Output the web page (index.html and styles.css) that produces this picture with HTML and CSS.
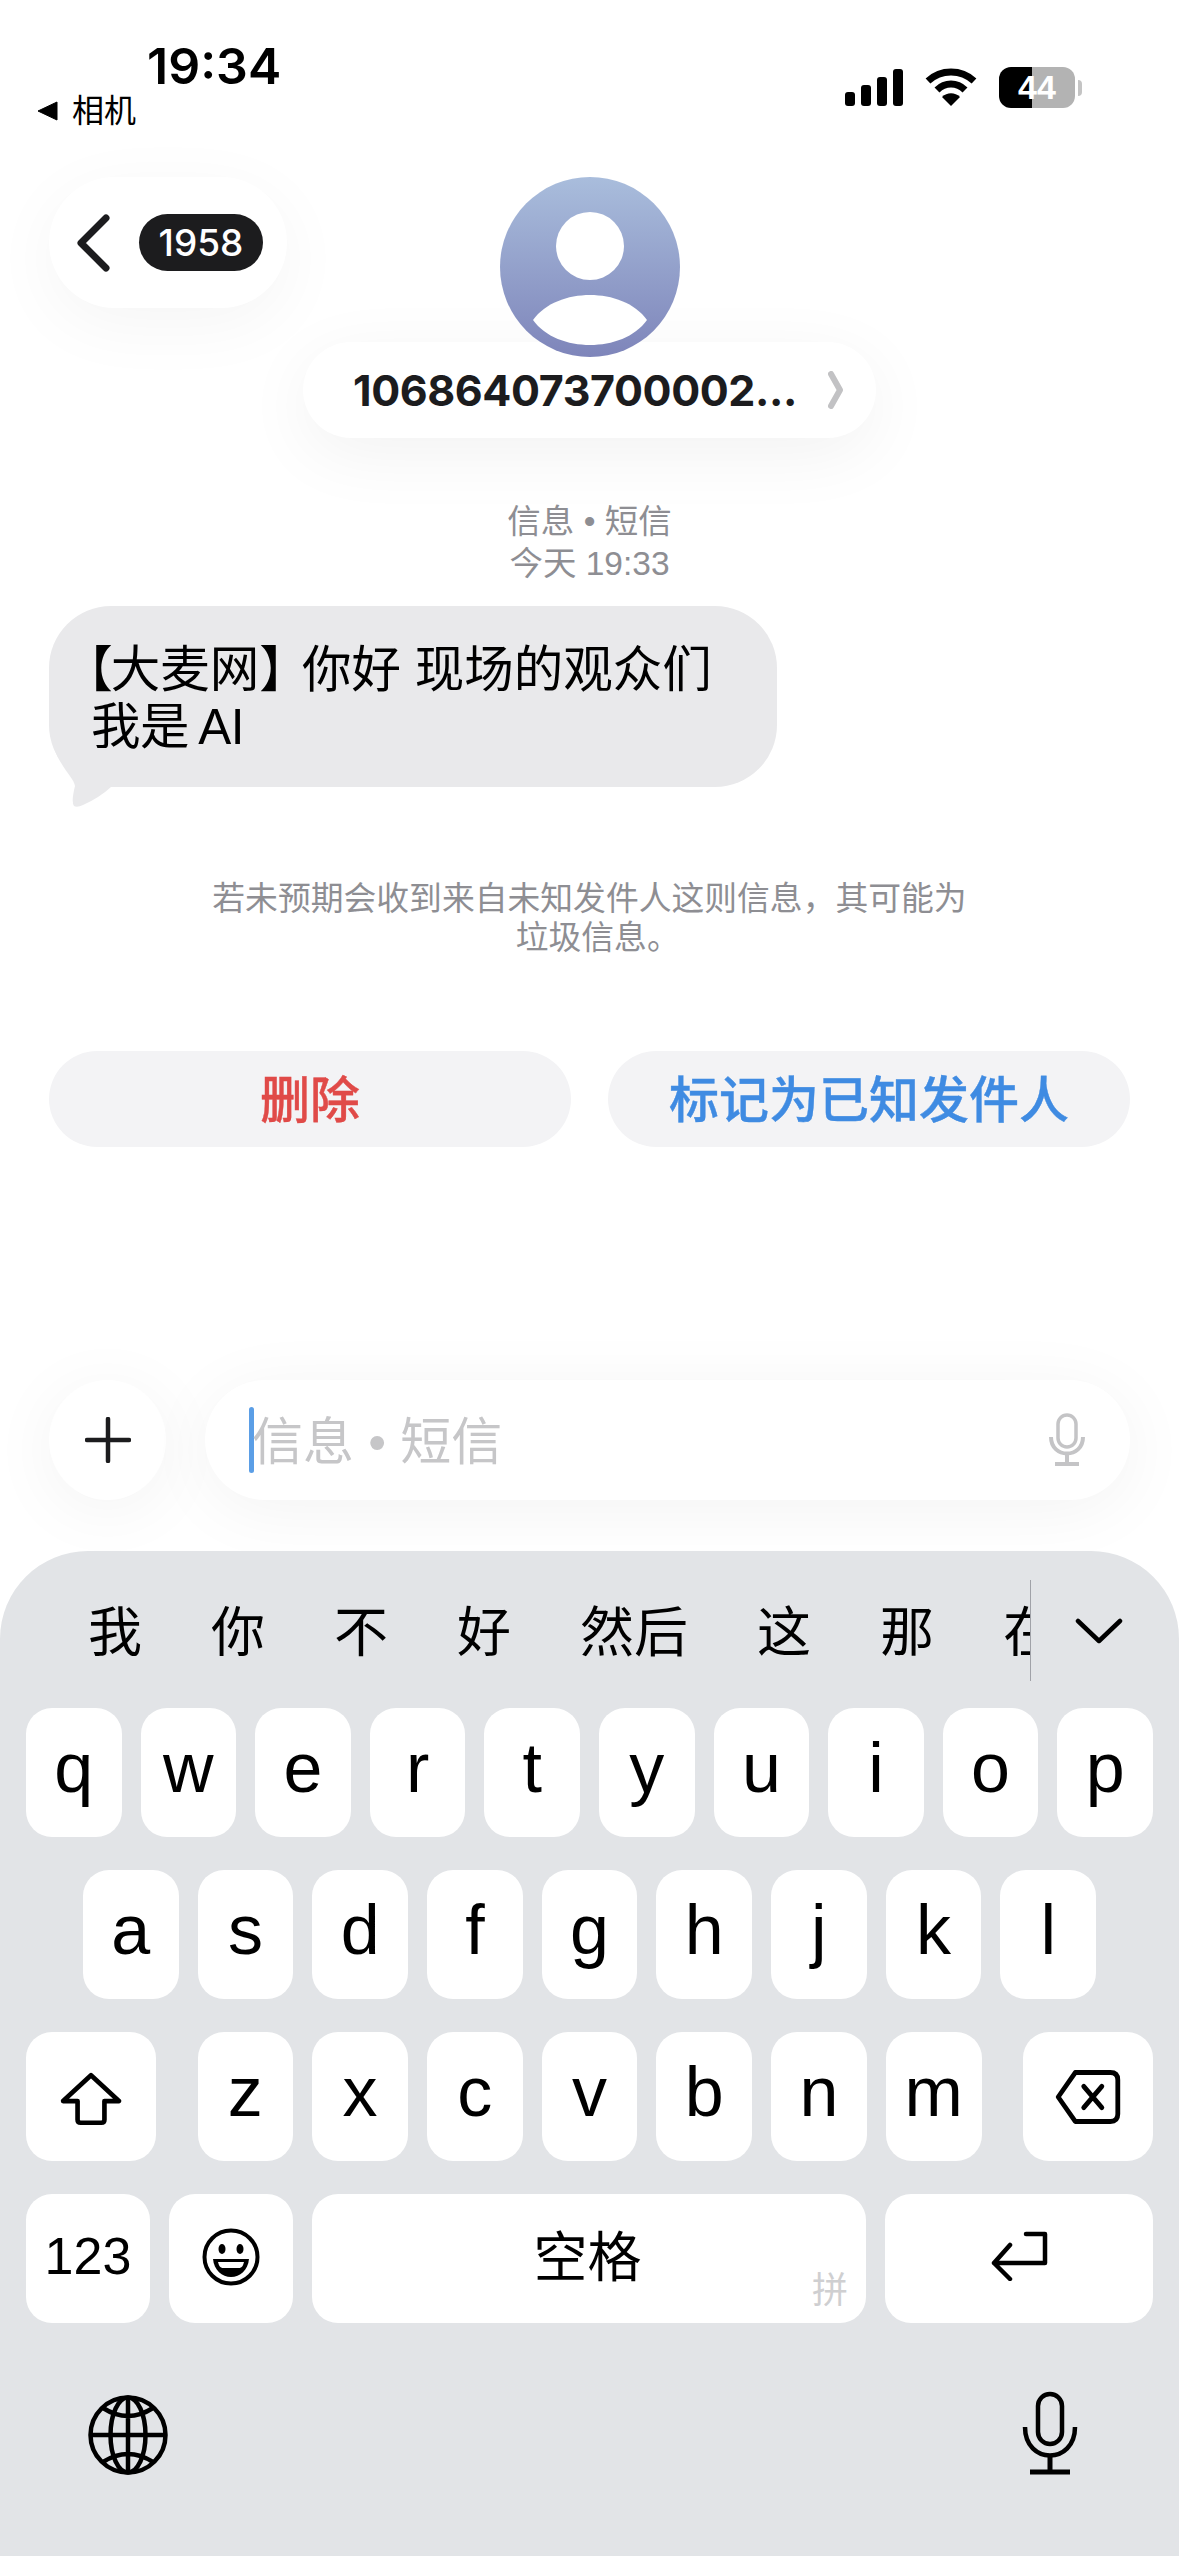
FILE: index.html
```html
<!DOCTYPE html>
<html lang="zh-CN">
<head>
  <meta charset="utf-8">
  <title>信息</title>
  <link rel="stylesheet" href="styles.css">
</head>
<body>
  <div class="phone">

    <div class="statusBar">
      <div class="statusLeft">
        <div class="time">19:34</div>
        <div class="backApp">
          <svg class="backTriangle" viewBox="0 0 21 20"><path d="M1 10 L20 1 V19 Z" fill="#000" stroke="#000" stroke-linejoin="round"/></svg>
          <span>相机</span>
        </div>
      </div>
      <div class="statusRight">
        <div class="signal">
          <span class="bar bar1"></span><span class="bar bar2"></span><span class="bar bar3"></span><span class="bar bar4"></span>
        </div>
        <svg class="wifi" viewBox="0 0 52 38">
          <path d="M3 13 C16 1 36 1 49 13" fill="none" stroke="#000" stroke-width="7"/>
          <path d="M12 22 C20 14 32 14 40 22" fill="none" stroke="#000" stroke-width="7"/>
          <path d="M17 29 C22 24 30 24 35 29 L26 38 Z" fill="#000"/>
        </svg>
        <div class="battery">44</div>
        <div class="batteryNub"></div>
      </div>
    </div>

    <div class="header">
      <div class="backPill">
        <svg class="backChevron" viewBox="0 0 34 58"><path d="M30 4 L5 29 L30 54" fill="none" stroke="#1c1c1e" stroke-width="7" stroke-linecap="round" stroke-linejoin="round"/></svg>
        <span class="badge">1958</span>
      </div>
      <div class="contact">
        <div class="avatar">
          <svg viewBox="0 0 180 180">
            <circle cx="90" cy="69" r="34" fill="#fff"/>
            <path d="M33 143 C45 126 68 118 90 118 C112 118 135 126 147 143 C135 160 112 168 90 168 C68 168 45 160 33 143 Z" fill="#fff"/>
          </svg>
        </div>
        <div class="namePill">
          <span class="name">106864073700002...</span>
          <svg class="nameChevron" viewBox="0 0 16 38"><path d="M3 3 L12 19 L3 35" fill="none" stroke="#c2c2c4" stroke-width="6" stroke-linecap="round" stroke-linejoin="round"/></svg>
        </div>
      </div>
    </div>

    <div class="meta">
      <div>信息 • 短信</div>
      <div>今天 19:33</div>
    </div>

    <div class="bubble">
      <div class="bubbleLine"><span class="bracketOpen">【</span>大麦网<span class="bracketClose">】</span>你好 现场的观众们</div>
      <div class="bubbleLine second">我是 AI</div>
      <svg class="bubbleTail" viewBox="0 0 80 60"><path d="M5 0 C12 20 25 30 26 38 Q22 54 25 58 Q28 60 34 57 Q50 50 62 39 L62 0 Z" fill="#e9e9eb"/></svg>
    </div>

    <div class="notice">
      <div>若未预期会收到来自未知发件人这则信息，其可能为</div>
      <div>垃圾信息<span class="halfStop">。</span></div>
    </div>

    <div class="actions">
      <div class="actionBtn deleteBtn">删除</div>
      <div class="actionBtn knownBtn">标记为已知发件人</div>
    </div>

    <div class="composer">
      <div class="plusBtn">
        <svg viewBox="0 0 46 46"><path d="M23 2 V44 M2 23 H44" stroke="#1c1c1e" stroke-width="4.5" stroke-linecap="round"/></svg>
      </div>
      <div class="inputBox">
        <span class="cursor"></span>
        <span class="placeholder">信息 • 短信</span>
        <svg class="inputMic" viewBox="0 0 36 54">
          <rect x="9" y="2" width="18" height="32" rx="9" fill="none" stroke="#c4c4c6" stroke-width="3.5"/>
          <path d="M2 24 C2 46 34 46 34 24 M18 41 V50 M6 51 H30" fill="none" stroke="#c4c4c6" stroke-width="4"/>
        </svg>
      </div>
    </div>

    <div class="keyboard">
      <div class="candidates">
        <div class="candidateList">
          <span>我</span><span>你</span><span>不</span><span>好</span><span>然后</span><span>这</span><span>那</span><span>在</span>
        </div>
        <svg class="candidateChevron" viewBox="0 0 48 26"><path d="M3 3 L24 23 L45 3" fill="none" stroke="#000" stroke-width="4.5" stroke-linecap="round" stroke-linejoin="round"/></svg>
      </div>

      <div class="keyRow">
        <div class="key">q</div><div class="key">w</div><div class="key">e</div><div class="key">r</div><div class="key">t</div><div class="key">y</div><div class="key">u</div><div class="key">i</div><div class="key">o</div><div class="key">p</div>
      </div>
      <div class="keyRow middleRow">
        <div class="key">a</div><div class="key">s</div><div class="key">d</div><div class="key">f</div><div class="key">g</div><div class="key">h</div><div class="key">j</div><div class="key">k</div><div class="key">l</div>
      </div>
      <div class="keyRow shiftRow">
        <div class="key sideKey">
          <svg class="shiftIcon" viewBox="0 0 60 52"><path d="M30 3 L57 28 H43 V46 Q43 49 40 49 H20 Q17 49 17 46 V28 H3 Z" fill="none" stroke="#000" stroke-width="4.5" stroke-linejoin="round"/></svg>
        </div>
        <div class="letterGroup">
          <div class="key">z</div><div class="key">x</div><div class="key">c</div><div class="key">v</div><div class="key">b</div><div class="key">n</div><div class="key">m</div>
        </div>
        <div class="key sideKey">
          <svg class="deleteIcon" viewBox="0 0 62 52"><path d="M19 3 H52 Q59 3 59 10 V42 Q59 49 52 49 H19 L3 26 Z" fill="none" stroke="#000" stroke-width="4.5" stroke-linejoin="round"/><path d="M27 16 L44 36 M44 16 L27 36" stroke="#000" stroke-width="4.5" stroke-linecap="round"/></svg>
        </div>
      </div>
      <div class="keyRow bottomRow">
        <div class="key numKey">123</div>
        <div class="key emojiKey">
          <svg class="emojiIcon" viewBox="0 0 58 58">
            <circle cx="29" cy="29" r="26.5" fill="none" stroke="#000" stroke-width="4"/>
            <ellipse cx="20" cy="21" rx="3.5" ry="5" fill="#000"/>
            <ellipse cx="38" cy="21" rx="3.5" ry="5" fill="#000"/>
            <path d="M11 31 H47 C46 42 38 49 29 49 C20 49 12 42 11 31 Z" fill="#000"/>
            <path d="M16 34 H42 C41 38 40 39 38 40 H20 C18 39 17 38 16 34 Z" fill="#fff"/>
          </svg>
        </div>
        <div class="key spaceKey">
          空格
          <span class="pinyinMark">拼</span>
        </div>
        <div class="key returnKey">
          <svg class="returnIcon" viewBox="0 0 58 50"><path d="M36 3 H55 V32 H4 M20 14 L4 32 L20 48" fill="none" stroke="#000" stroke-width="4.5" stroke-linecap="round" stroke-linejoin="round"/></svg>
        </div>
      </div>

      <div class="keyboardBottom">
        <svg class="globeIcon" viewBox="0 0 80 80">
          <g fill="none" stroke="#000" stroke-width="4.5">
            <circle cx="40" cy="40" r="37.5"/>
            <ellipse cx="40" cy="40" rx="17.5" ry="37.5"/>
            <path d="M40 2.5 V77.5 M2.5 40 H77.5 M15 13 Q40 29 65 13 M15 67 Q40 51 65 67"/>
          </g>
        </svg>
        <svg class="micIcon" viewBox="0 0 56 84">
          <g fill="none" stroke="#000" stroke-width="4.5">
            <rect x="16" y="3" width="24" height="50" rx="12"/>
            <path d="M3 36 C3 74 53 74 53 36"/>
            <path d="M28 64 V80 M8 81 H48" stroke-width="5"/>
          </g>
        </svg>
      </div>
    </div>

  </div>
</body>
</html>
```

FILE: styles.css
```css
* {
  box-sizing: border-box;
}

body {
  margin: 0;
  background-color: #fff;
  font-family: "Liberation Sans", "Noto Sans CJK SC", sans-serif;
  color: #000;
}

.phone {
  width: 1179px;
  height: 2556px;
  overflow: hidden;
  display: flex;
  flex-direction: column;
}

/* status bar */
.statusBar {
  height: 177px;
  display: flex;
  justify-content: space-between;
  padding: 41px 97px 0 37px;
}

.time {
  margin-left: 110px;
  font-family: Inter, "Liberation Sans", sans-serif;
  font-size: 50px;
  font-weight: 600;
  line-height: 50px;
}

.backApp {
  display: flex;
  align-items: center;
  gap: 14px;
  font-size: 32px;
  line-height: 40px;
}

.backTriangle {
  width: 21px;
  height: 20px;
}

.statusRight {
  display: flex;
  align-items: flex-end;
  height: 67px;
}

.signal {
  display: flex;
  align-items: flex-end;
  gap: 6px;
  margin-bottom: 2px;
}

.bar {
  width: 10px;
  border-radius: 3px;
  background-color: #000;
}

.bar1 { height: 14px; }
.bar2 { height: 21px; }
.bar3 { height: 29px; }
.bar4 { height: 37px; }

.wifi {
  width: 52px;
  height: 38px;
  margin: 0 22px;
  margin-bottom: 2px;
}

.battery {
  width: 76px;
  height: 41px;
  border-radius: 12px;
  background: linear-gradient(to right, #000 0, #000 33px, #b3b3b3 33px, #b3b3b3 100%);
  color: #fff;
  font-size: 34px;
  font-weight: bold;
  line-height: 41px;
  text-align: center;
}

.batteryNub {
  width: 4px;
  height: 16px;
  margin: 0 0 12px 3px;
  border-radius: 0 4px 4px 0;
  background-color: #c4c4c4;
}

/* header */
.header {
  height: 261px;
  display: grid;
  grid-template-columns: 1fr 573px 1fr;
}

.backPill {
  width: 238px;
  height: 131px;
  margin-left: 49px;
  padding-left: 27px;
  display: flex;
  align-items: center;
  gap: 29px;
  border-radius: 66px;
  background-color: #fff;
  box-shadow: 0 16px 70px rgba(0, 0, 0, 0.045);
}

.backChevron {
  width: 34px;
  height: 58px;
}

.badge {
  width: 124px;
  height: 57px;
  border-radius: 29px;
  background-color: #1c1c1e;
  color: #fff;
  font-family: Inter, "Liberation Sans", sans-serif;
  font-size: 37px;
  font-weight: 500;
  line-height: 57px;
  text-align: center;
}

.contact {
  display: flex;
  flex-direction: column;
  align-items: center;
}

.avatar {
  position: relative;
  z-index: 1;
  width: 180px;
  height: 180px;
  border-radius: 50%;
  background: linear-gradient(#a9bddc, #7e85ba);
}

.avatar svg {
  display: block;
  width: 180px;
  height: 180px;
}

.namePill {
  width: 573px;
  height: 96px;
  margin-top: -15px;
  padding-left: 50px;
  display: flex;
  align-items: center;
  gap: 30px;
  border-radius: 48px;
  background-color: #fff;
  box-shadow: 0 16px 70px rgba(0, 0, 0, 0.055);
}

.name {
  width: 445px;
  color: #1c1c1e;
  font-family: Inter, "Liberation Sans", sans-serif;
  font-size: 43px;
  font-weight: 700;
  letter-spacing: -0.4px;
  white-space: nowrap;
}

.nameChevron {
  width: 16px;
  height: 38px;
}

/* message */
.meta {
  margin-top: 63px;
  color: #8e8e93;
  font-size: 33.5px;
  line-height: 42px;
  text-align: center;
}

.bubble {
  position: relative;
  width: 728px;
  height: 181px;
  margin: 21px 0 0 49px;
  padding: 35px 0 0 39px;
  border-radius: 62px;
  background-color: #e9e9eb;
  font-size: 49.5px;
  line-height: 57px;
}

.bubbleLine {
  white-space: nowrap;
}

.bracketOpen {
  font-feature-settings: "halt";
  margin-right: -2px;
}

.bracketClose {
  font-feature-settings: "halt";
  margin-right: 18px;
}

.bubbleLine.second {
  margin-left: 3px;
  letter-spacing: -0.5px;
  word-spacing: -4px;
}

.bubbleTail {
  position: absolute;
  left: 0;
  bottom: -21px;
  width: 80px;
  height: 60px;
}

.notice {
  margin-top: 92px;
  color: #8e8e93;
  font-size: 32.8px;
  line-height: 39px;
  text-align: center;
}

.halfStop {
  font-feature-settings: "halt";
}

.actions {
  display: flex;
  gap: 37px;
  margin-top: 94px;
  padding: 0 49px;
}

.actionBtn {
  flex: 1;
  height: 96px;
  padding-top: 2px;
  border-radius: 48px;
  background-color: #f3f3f5;
  font-size: 50px;
  font-weight: 500;
  line-height: 96px;
  text-align: center;
  -webkit-text-stroke: 0.4px currentColor;
}

.deleteBtn {
  color: #e04a48;
}

.knownBtn {
  color: #3f8be2;
}

/* input row */
.composer {
  display: flex;
  gap: 39px;
  height: 120px;
  margin-top: 233px;
  padding: 0 49px;
}

.plusBtn {
  width: 117px;
  height: 120px;
  display: flex;
  align-items: center;
  justify-content: center;
  border-radius: 50%;
  background-color: #fff;
  box-shadow: 0 10px 70px rgba(0, 0, 0, 0.05);
}

.plusBtn svg {
  width: 46px;
  height: 46px;
}

.inputBox {
  flex: 1;
  display: flex;
  align-items: center;
  padding: 0 45px 0 44px;
  border-radius: 60px;
  background-color: #fff;
  box-shadow: 0 10px 70px rgba(0, 0, 0, 0.05);
}

.cursor {
  width: 5px;
  height: 66px;
  border-radius: 3px;
  background-color: #5b9ee6;
}

.placeholder {
  flex: 1;
  margin: 0 0 4px -2px;
  color: #c6c6c8;
  font-size: 51px;
}

.inputMic {
  width: 36px;
  height: 54px;
}

/* keyboard */
.keyboard {
  position: relative;
  height: 1005px;
  margin-top: 51px;
  padding-top: 29px;
  border-radius: 88px 88px 0 0;
  background-color: #e2e4e7;
}

.candidates {
  height: 101px;
  display: flex;
  align-items: center;
  margin-bottom: 27px;
}

.candidateList {
  width: 1031px;
  height: 101px;
  padding: 0 0 4px 88px;
  display: flex;
  align-items: center;
  gap: 69px;
  overflow: hidden;
  border-right: 1px solid #a0a2a8;
  font-size: 54px;
  white-space: nowrap;
}

.candidateList span {
  flex-shrink: 0;
}

.candidateChevron {
  width: 48px;
  height: 26px;
  margin-left: 44px;
}

.keyRow {
  display: flex;
  gap: 19px;
  height: 129px;
  margin-bottom: 33px;
  padding: 0 26px;
}

.middleRow {
  padding: 0 83px;
}

.shiftRow {
  justify-content: space-between;
}

.bottomRow {
  margin-bottom: 0;
}

.key {
  position: relative;
  flex: 1;
  display: flex;
  align-items: center;
  justify-content: center;
  padding-bottom: 9px;
  border-radius: 26px;
  background-color: #fff;
  font-size: 70px;
}

.letterGroup {
  width: 784px;
  display: flex;
  gap: 19px;
}

.sideKey {
  flex: 0 0 130px;
  padding-bottom: 0;
}

.numKey {
  flex: 0 0 124px;
  padding-bottom: 5px;
  font-size: 52px;
}

.emojiKey {
  flex: 0 0 124px;
  padding-bottom: 3px;
}

.spaceKey {
  flex: 0 0 554px;
  padding: 0 3px 11px 0;
  font-size: 54px;
}

.returnKey {
  padding-bottom: 5px;
}

.pinyinMark {
  position: absolute;
  right: 18px;
  bottom: 10px;
  color: #cfcfd1;
  font-size: 36px;
}

.shiftIcon {
  width: 62px;
  height: 54px;
  margin-top: 4px;
}

.deleteIcon {
  width: 66px;
  height: 56px;
}

.emojiIcon {
  width: 58px;
  height: 58px;
}

.returnIcon {
  width: 58px;
  height: 50px;
}

.keyboardBottom {
  display: flex;
  justify-content: space-between;
  align-items: flex-end;
  height: 84px;
  margin-top: 68px;
  padding: 0 101px 0 88px;
}

.globeIcon {
  width: 80px;
  height: 80px;
}

.micIcon {
  width: 56px;
  height: 84px;
}
```
